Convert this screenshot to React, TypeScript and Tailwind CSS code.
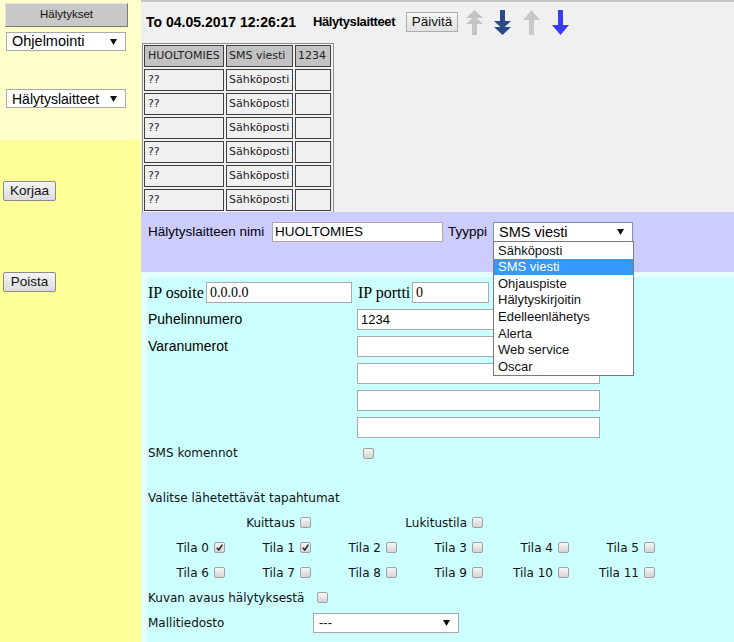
import React from 'react';

const arial = "font-['Liberation_Sans',Arial,sans-serif]";
const verd = "font-['DejaVu_Sans',Verdana,sans-serif]";
const serif = "font-['Liberation_Serif','Times_New_Roman',serif]";

const ARROWS = {
  dblUp: 'M8.5 0 L17 8 L10.6 8 L17 14 L11 14 L11 25 L6 25 L6 14 L0 14 L6.4 8 L0 8 Z',
  dblDown: 'M8.5 25 L17 17 L10.6 17 L17 11 L11 11 L11 0 L6 0 L6 11 L0 11 L6.4 17 L0 17 Z',
  up: 'M8.5 0 L17 10 L11 10 L11 25 L6 25 L6 10 L0 10 Z',
  down: 'M8.5 25 L17 15 L11 15 L11 0 L6 0 L6 15 L0 15 Z',
};

const TYPES = [
  'Sähköposti',
  'SMS viesti',
  'Ohjauspiste',
  'Hälytyskirjoitin',
  'Edelleenlähetys',
  'Alerta',
  'Web service',
  'Oscar',
];

function Arrow({ d, color, className = '' }: { d: string; color: string; className?: string }) {
  return (
    <svg viewBox="0 0 17 25" className={`h-[25px] w-[17px] shrink-0 ${className}`}>
      <path d={d} fill={color} />
    </svg>
  );
}

function Caret() {
  return (
    <svg viewBox="0 0 7 6" className="h-[6px] w-[7px] shrink-0">
      <path d="M0 0 L7 0 L3.5 6 Z" fill="#111" />
    </svg>
  );
}

function FakeSelect({
  value,
  className = '',
  border = 'border-[#a9a9a9]',
}: {
  value: string;
  className?: string;
  border?: string;
}) {
  return (
    <div className={`flex items-center justify-between border ${border} bg-white pl-[5px] pr-[8px] ${className}`}>
      <span className="leading-none">{value}</span>
      <Caret />
    </div>
  );
}

function Check({ checked = false, className = '' }: { checked?: boolean; className?: string }) {
  return (
    <span
      className={`inline-flex h-[11px] w-[11px] shrink-0 items-center justify-center rounded-[2px] border border-[#a0a0a0] bg-linear-to-b from-[#f6f6f6] to-[#d4d4d4] ${className}`}
    >
      {checked && (
        <svg viewBox="0 0 10 10" className="h-[9px] w-[9px]">
          <path d="M2 5.2 L4.2 7.6 L8.2 1.8" stroke="#2a2a2a" strokeWidth="1.8" fill="none" />
        </svg>
      )}
    </span>
  );
}

function SideButton({ children, className = '' }: { children: React.ReactNode; className?: string }) {
  return (
    <button
      className={`flex h-[20px] w-[53px] items-center justify-center rounded-[2px] border border-[#8a8a8a] bg-linear-to-b from-[#f4f4f4] to-[#dcdcdc] text-[13.5px] text-[#111] ${arial} ${className}`}
    >
      {children}
    </button>
  );
}

function Tila({ label, checked = false }: { label?: string; checked?: boolean }) {
  return (
    <div className="flex items-center justify-end pr-[9px]">
      {label && (
        <>
          <span>{label}</span>
          <Check checked={checked} className="ml-[5px]" />
        </>
      )}
    </div>
  );
}

export default function App() {
  const rows = Array.from({ length: 6 });

  return (
    <div className={`flex h-[642px] w-[734px] overflow-hidden bg-[#f0f0f0] text-black ${arial}`}>
      {/* Sidebar */}
      <aside className="flex w-[141px] shrink-0 flex-col">
        <div className="h-[140px] bg-[#ffffcc] pt-[3px]">
          <button className="ml-[5px] flex h-[24px] w-[123px] items-center justify-center border border-b-[#7a7a7a] border-l-[#e4e4e4] border-r-[#7a7a7a] border-t-[#e4e4e4] bg-[#c8c8c8] text-[11.5px] text-[#111]">
            Hälytykset
          </button>
          <FakeSelect value="Ohjelmointi" className="ml-[6px] mt-[5px] h-[19px] w-[120px] text-[14.5px]" />
          <FakeSelect value="Hälytyslaitteet" className="ml-[6px] mt-[38px] h-[19px] w-[120px] text-[14px]" />
        </div>
        <div className="flex-1 bg-[#ffff99] pl-[3px] pt-[41px]">
          <SideButton>Korjaa</SideButton>
          <SideButton className="mt-[71px]">Poista</SideButton>
        </div>
      </aside>

      {/* Main */}
      <main className="relative flex min-w-0 flex-1 flex-col">
        <section className="h-[212px] shrink-0 overflow-hidden border-t-2 border-[#c6c6c6] bg-[#f0f0f0]">
          <div className="mt-[7px] flex h-[26px] items-center pl-[5px]">
            <span className="text-[14px] font-bold">To 04.05.2017 12:26:21</span>
            <span className="ml-[17px] text-[13px] font-bold tracking-[-0.4px]">Hälytyslaitteet</span>
            <button className="ml-[11px] flex h-[20px] w-[52px] items-center justify-center border border-[#adadad] bg-linear-to-b from-[#f6f6f6] to-[#e2e2e2] text-[13.5px] text-[#111]">
              Päivitä
            </button>
            <Arrow d={ARROWS.dblUp} color="#c4c4c4" className="ml-[8px]" />
            <Arrow d={ARROWS.dblDown} color="#284a8a" className="ml-[11px]" />
            <Arrow d={ARROWS.up} color="#c8c8c8" className="ml-[12px]" />
            <Arrow d={ARROWS.down} color="#3c3cf4" className="ml-[12px]" />
          </div>

          {/* Device table */}
          <div className={`ml-[1px] mt-[8px] w-[192px] border border-[#8c8c8c] p-[1px] text-[11px] text-[#222] ${verd}`}>
            <div className="grid grid-cols-[80px_67px_36px] gap-[2px]">
              <div className="flex h-[22px] items-center border border-[#404040] bg-[#c3c3c3] pl-[3px]">HUOLTOMIES</div>
              <div className="flex h-[22px] items-center border border-[#404040] bg-[#c3c3c3] pl-[2px]">SMS viesti</div>
              <div className="flex h-[22px] items-center border border-[#404040] bg-[#c3c3c3] pl-[2px]">1234</div>
              {rows.map((_, i) => (
                <React.Fragment key={i}>
                  <div className="flex h-[22px] items-center border border-[#404040] pl-[3px]">??</div>
                  <div className="flex h-[22px] items-center border border-[#404040] pl-[2px]">Sähköposti</div>
                  <div className="h-[22px] border border-[#404040]" />
                </React.Fragment>
              ))}
            </div>
          </div>
        </section>

        {/* Name / type band */}
        <section className="h-[60px] shrink-0 bg-[#ccccff] pl-[7px] pt-[10px] text-[13.5px]">
          <div className="flex h-[20px] items-center">
            <span className="w-[124px]">Hälytyslaitteen nimi</span>
            <input
              readOnly
              value="HUOLTOMIES"
              className="h-[20px] w-[171px] border border-[#a9a9a9] bg-white pl-[2px] text-[13.5px] outline-none"
            />
            <span className="w-[50px] pl-[5px]">Tyyppi</span>
            <FakeSelect
              value="SMS viesti"
              border="border-[#7a93b4]"
              className="h-[20px] w-[140px] pl-[4px] text-[14.5px]"
            />
          </div>
        </section>

        {/* Open type list */}
        <ul className="absolute left-[352px] top-[241px] z-10 w-[141px] border border-[#7a7a7a] bg-white text-[13px] text-[#111]">
          {TYPES.map((t) => (
            <li
              key={t}
              className={`flex h-[16.6px] items-center pl-[4px] ${t === 'SMS viesti' ? 'bg-[#3399ff] text-white' : ''}`}
            >
              {t}
            </li>
          ))}
        </ul>

        {/* Details */}
        <section className="flex-1 border-l-[6px] border-t-[5px] border-[#e6ffff] bg-[#ccffff] pl-[1px] pt-[5px]">
          <div className="flex h-[21px] items-center">
            <span className={`w-[58px] text-[16px] ${serif}`}>IP osoite</span>
            <input
              readOnly
              value="0.0.0.0"
              className={`h-[21px] w-[146px] border border-[#a9a9a9] bg-white pl-[3px] text-[14px] outline-none ${serif}`}
            />
            <span className={`ml-[6px] w-[54px] text-[16px] ${serif}`}>IP portti</span>
            <input
              readOnly
              value="0"
              className={`h-[21px] w-[77px] border border-[#a9a9a9] bg-white pl-[3px] text-[14px] outline-none ${serif}`}
            />
          </div>

          <div className="mt-[6px] flex h-[21px] items-center text-[14px]">
            <span className="w-[209px]">Puhelinnumero</span>
            <input
              readOnly
              value="1234"
              className="h-[21px] w-[243px] border border-[#a9a9a9] bg-white pl-[3px] text-[13px] outline-none"
            />
          </div>

          <div className="mt-[6px] flex text-[14px]">
            <span className="flex h-[21px] w-[209px] items-center">Varanumerot</span>
            <div className="flex flex-col gap-[6px]">
              {[0, 1, 2, 3].map((i) => (
                <input
                  key={i}
                  readOnly
                  value=""
                  className="h-[21px] w-[243px] border border-[#a9a9a9] bg-white outline-none"
                />
              ))}
            </div>
          </div>

          <div className={`text-[12px] text-[#111] ${verd}`}>
            <div className="mt-[4px] flex h-[22px] items-center">
              <span className="w-[215px]">SMS komennot</span>
              <Check />
            </div>

            <div className="mt-[21px] flex h-[25px] items-center">Valitse lähetettävät tapahtumat</div>

            <div className="grid h-[25px] grid-cols-[repeat(6,86px)]">
              <Tila />
              <Tila label="Kuittaus" />
              <Tila />
              <Tila label="Lukitustila" />
            </div>
            <div className="grid h-[25px] grid-cols-[repeat(6,86px)]">
              <Tila label="Tila 0" checked />
              <Tila label="Tila 1" checked />
              <Tila label="Tila 2" />
              <Tila label="Tila 3" />
              <Tila label="Tila 4" />
              <Tila label="Tila 5" />
            </div>
            <div className="grid h-[25px] grid-cols-[repeat(6,86px)]">
              <Tila label="Tila 6" />
              <Tila label="Tila 7" />
              <Tila label="Tila 8" />
              <Tila label="Tila 9" />
              <Tila label="Tila 10" />
              <Tila label="Tila 11" />
            </div>

            <div className="flex h-[25px] items-center">
              <span className="w-[165px]">Kuvan avaus hälytyksestä</span>
              <Check className="ml-[4px]" />
            </div>

            <div className="flex h-[25px] items-center">
              <span className="w-[165px]">Mallitiedosto</span>
              <FakeSelect value="---" className={`h-[20px] w-[146px] text-[13px] ${arial}`} />
            </div>
          </div>
        </section>
      </main>
    </div>
  );
}
